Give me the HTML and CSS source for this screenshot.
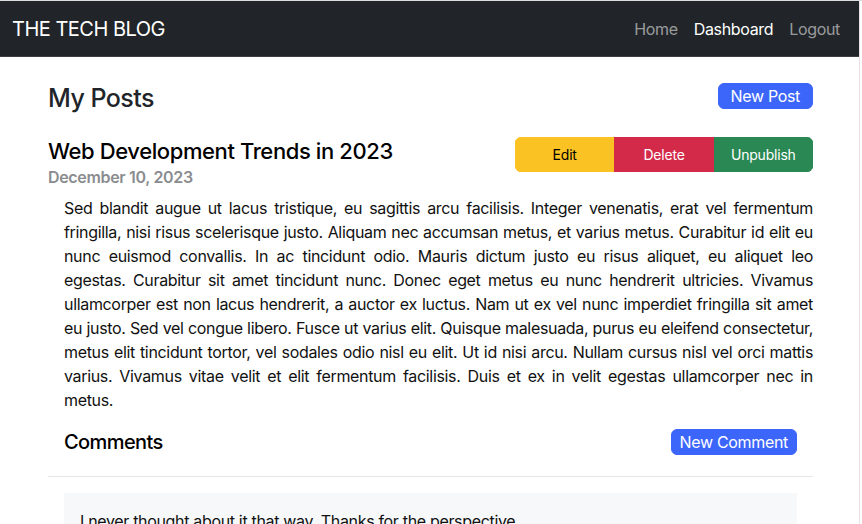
FILE: index.html
```html
<!DOCTYPE html>
<html lang="en">
<head>
<meta charset="utf-8">
<title>The Tech Blog</title>
<link rel="stylesheet" href="styles.css">
</head>
<body>
<div class="page">
  <nav class="navbar">
    <a class="brand" href="#">THE TECH BLOG</a>
    <ul class="nav">
      <li><a class="nav-link" href="#">Home</a></li>
      <li><a class="nav-link active" href="#">Dashboard</a></li>
      <li><a class="nav-link" href="#">Logout</a></li>
    </ul>
  </nav>
  <main class="main">
    <div class="head-row">
      <h3 class="page-title">My Posts</h3>
      <button class="btn btn-primary">New Post</button>
    </div>
    <article class="post">
      <div class="post-head">
        <div class="post-meta">
          <h4 class="post-title">Web Development Trends in 2023</h4>
          <h6 class="post-date">December 10, 2023</h6>
        </div>
        <div class="btn-group">
          <button class="gbtn gbtn-warning">Edit</button>
          <button class="gbtn gbtn-danger">Delete</button>
          <button class="gbtn gbtn-success">Unpublish</button>
        </div>
      </div>
      <p class="post-body">Sed blandit augue ut lacus tristique, eu sagittis arcu facilisis. Integer venenatis, erat vel fermentum fringilla, nisi risus scelerisque justo. Aliquam nec accumsan metus, et varius metus. Curabitur id elit eu nunc euismod convallis. In ac tincidunt odio. Mauris dictum justo eu risus aliquet, eu aliquet leo egestas. Curabitur sit amet tincidunt nunc. Donec eget metus eu nunc hendrerit ultricies. Vivamus ullamcorper est non lacus hendrerit, a auctor ex luctus. Nam ut ex vel nunc imperdiet fringilla sit amet eu justo. Sed vel congue libero. Fusce ut varius elit. Quisque malesuada, purus eu eleifend consectetur, metus elit tincidunt tortor, vel sodales odio nisl eu elit. Ut id nisi arcu. Nullam cursus nisl vel orci mattis varius. Vivamus vitae velit et elit fermentum facilisis. Duis et ex in velit egestas ullamcorper nec in metus.</p>
      <div class="comments-head">
        <h5 class="comments-title">Comments</h5>
        <button class="btn btn-primary btn-new-comment">New Comment</button>
      </div>
      <hr class="divider">
      <div class="comment">
        <p class="comment-text">I never thought about it that way. Thanks for the perspective.</p>
      </div>
    </article>
  </main>
</div>
</body>
</html>
```

FILE: styles.css
```css
* { box-sizing: border-box; }
html { background: #fff; }
body {
  margin: 0;
  border-top: 1px solid #dcdcdc;
  font-family: Inter, "Liberation Sans", sans-serif;
  font-size: 16px;
  line-height: 1.5;
  letter-spacing: -0.33px;
  color: #212529;
  overflow: hidden;
}
.page {
  width: 860px;
  height: 523px;
  overflow: hidden;
  border-right: 1px solid #e4e4e4;
}
.navbar {
  display: flex;
  align-items: center;
  justify-content: space-between;
  background: #212529;
  height: 56px;
  padding: 0 11px 0 12px;
  border-bottom: 1px solid #3b3f43;
}
.brand {
  color: #fff;
  text-decoration: none;
  font-size: 20px;
  line-height: 30px;
  letter-spacing: -0.5px;
}
.nav {
  display: flex;
  list-style: none;
  margin: 0;
  padding: 0;
}
.nav-link {
  display: block;
  padding: 8px;
  color: rgba(255,255,255,.55);
  text-decoration: none;
}
.nav-link.active { color: #fff; }
.main {
  margin: 0 46px 0 48px;
  padding-top: 26px;
}
.head-row {
  display: flex;
  justify-content: space-between;
  align-items: flex-start;
}
.page-title {
  margin: 0;
  font-size: 25px;
  line-height: 31px;
  font-weight: 500;
  letter-spacing: -0.55px;
}
.btn {
  font-family: inherit;
  font-size: 16px;
  line-height: 24px;
  letter-spacing: -0.33px;
  padding: 0 12px;
  border: 1px solid transparent;
  border-radius: 6px;
  cursor: pointer;
}
.btn-new-comment { padding: 0 8px; }
.btn-primary {
  background: #3c66fa;
  border-color: #3c66fa;
  color: #fff;
}
.post { margin-top: 23px; }
.post-head {
  display: flex;
  justify-content: space-between;
  align-items: flex-start;
}
.post-title {
  margin: 0;
  padding-top: 1px;
  font-size: 22px;
  line-height: 27px;
  font-weight: 500;
  letter-spacing: -0.4px;
  color: #000;
}
.post-date {
  margin: 0 0 7px;
  font-size: 16px;
  line-height: 24px;
  font-weight: 600;
  color: #8a8c8f;
}
.btn-group {
  display: flex;
  width: 298px;
  border-radius: 6px;
  overflow: hidden;
}
.gbtn {
  flex: 1 1 0;
  font-family: inherit;
  font-size: 14px;
  line-height: 21px;
  letter-spacing: -0.2px;
  padding: 6px 0;
  border: 1px solid transparent;
  cursor: pointer;
}
.gbtn-warning { background: #fac223; border-color: #fac223; color: #000; }
.gbtn-danger { background: #d42a4a; border-color: #d42a4a; color: #fff; }
.gbtn-success { background: #2a8854; border-color: #2a8854; color: #fff; }
.post-body {
  margin: 0 0 17px;
  padding-left: 16px;
  text-align: justify;
  color: #111;
}
.comments-head {
  display: flex;
  justify-content: space-between;
  align-items: center;
  padding: 0 16px;
}
.comments-title {
  margin: 0;
  font-size: 20px;
  line-height: 24px;
  font-weight: 500;
  letter-spacing: -0.6px;
  color: #000;
}
.divider {
  margin: 21px 0 16px;
  border: 0;
  border-top: 1px solid #e6e6e6;
}
.comment {
  margin: 0 16px;
  padding: 16px;
  background: #f7f8f9;
}
.comment-text { margin: 0; color: #111; }
```
